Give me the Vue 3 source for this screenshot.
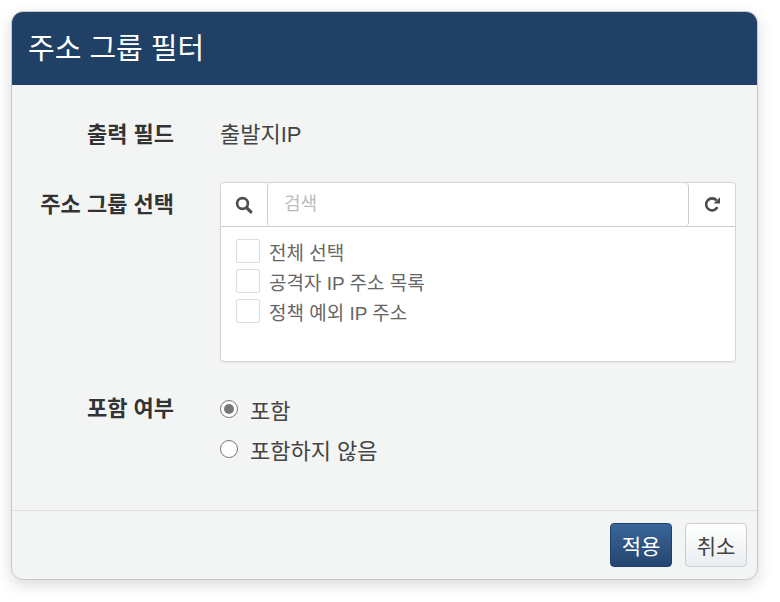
<template>
  <div class="page">
    <div class="modal">
      <div class="modal-header">
        <span class="modal-title">주소 그룹 필터</span>
      </div>

      <div class="modal-body">
        <div class="form-row first">
          <label class="form-label">출력 필드</label>
          <div class="form-value">출발지IP</div>
        </div>

        <div class="form-row group-row">
          <label class="form-label">주소 그룹 선택</label>
          <div class="picker">
            <div class="picker-toolbar">
              <span class="addon left">
                <svg width="18" height="18" viewBox="0 0 18 18">
                  <circle cx="7.5" cy="7.5" r="5.4" fill="none" stroke="#4d4d4d" stroke-width="2.7" />
                  <path d="M11.6 11.6 L15.8 15.8" stroke="#4d4d4d" stroke-width="3.2" stroke-linecap="round" />
                </svg>
              </span>
              <input class="search-input" type="text" placeholder="검색" />
              <span class="addon right">
                <svg width="17" height="17" viewBox="0 0 17 17">
                  <path d="M13.4 11.2 A6 6 0 1 1 12.6 4.4" fill="none" stroke="#4d4d4d" stroke-width="2.6" />
                  <path d="M16 1.2 V7.6 H9.6 Z" fill="#4d4d4d" />
                </svg>
              </span>
            </div>
            <ul class="picker-list">
              <li v-for="item in groups" :key="item" class="picker-item">
                <span class="check-box"></span>
                <span>{{ item }}</span>
              </li>
            </ul>
          </div>
        </div>

        <div class="form-row include-row">
          <label class="form-label">포함 여부</label>
          <div class="radios">
            <div v-for="opt in options" :key="opt.value" class="radio-item">
              <span class="radio" :class="{ checked: include === opt.value }"></span>
              <span>{{ opt.label }}</span>
            </div>
          </div>
        </div>
      </div>

      <div class="modal-footer">
        <button class="btn primary">적용</button>
        <button class="btn">취소</button>
      </div>
    </div>
  </div>
</template>

<script setup>
import { ref } from 'vue';

const groups = ['전체 선택', '공격자 IP 주소 목록', '정책 예외 IP 주소'];
const options = [
  { value: 'in', label: '포함' },
  { value: 'out', label: '포함하지 않음' }
];
const include = ref('in');
</script>

<style>
html, body {
  margin: 0;
  background: #fff;
}
</style>

<style scoped>
.page {
  width: 780px;
  height: 602px;
  padding: 11px 22px 22px 11px;
  box-sizing: border-box;
  font-family: "Liberation Sans", "Noto Sans CJK KR", sans-serif;
  color: #333;
}

.modal {
  height: 569px;
  display: flex;
  flex-direction: column;
  box-sizing: border-box;
  background-color: #f3f5f5;
  border: 1px solid #c8c8c8;
  border-radius: 12px;
  box-shadow: 0 5px 15px rgba(0, 0, 0, 0.15);
  overflow: hidden;
}

.modal-header {
  height: 73px;
  flex: none;
  padding: 0 16px;
  display: flex;
  align-items: center;
  background-color: #204066;
}

.modal-title {
  font-size: 29px;
  color: #fff;
  position: relative;
  top: -3px;
}

.modal-body {
  flex: 1;
  padding: 0 21px 0 0;
}

.form-row {
  display: flex;
}

.form-row.first {
  margin-top: 32px;
  height: 30px;
  align-items: center;
}

.group-row {
  margin-top: 35px;
}

.include-row {
  margin-top: 30px;
}

.form-label {
  width: 162px;
  flex: none;
  text-align: right;
  font-size: 22px;
  font-weight: 700;
  color: #333;
}

.form-value {
  margin-left: 46px;
  font-size: 22px;
  color: #444;
}

.group-row .form-label {
  line-height: 46px;
}

.include-row .form-label {
  line-height: 34px;
}

.picker {
  margin-left: 46px;
  flex: 1;
  height: 180px;
  box-sizing: border-box;
  border: 1px solid #d4d4d4;
  border-radius: 4px;
  background-color: #fff;
  box-shadow: 0 1px 2px rgba(0, 0, 0, 0.06);
}

.picker-toolbar {
  display: flex;
  height: 43px;
  border-bottom: 1px solid #ccc;
}

.addon {
  width: 46px;
  flex: none;
  display: flex;
  align-items: center;
  justify-content: center;
}

.search-input {
  flex: 1;
  min-width: 0;
  box-sizing: border-box;
  height: 43px;
  margin: 0;
  padding: 0 16px;
  border: 1px solid #ccc;
  border-top: none;
  border-bottom: none;
  border-radius: 4px;
  outline: none;
  font-family: inherit;
  font-size: 18px;
}

.search-input::placeholder {
  color: #bbb;
}

.picker-list {
  list-style: none;
  margin: 0;
  padding: 9px 15px 0;
}

.picker-item {
  display: flex;
  align-items: center;
  height: 30px;
  gap: 9px;
  font-size: 19px;
  color: #666;
}

.check-box {
  width: 24px;
  height: 24px;
  box-sizing: border-box;
  border: 1px solid #ddd;
  border-radius: 2px;
  background-color: #fff;
}

.radios {
  margin-left: 46px;
  display: flex;
  flex-direction: column;
  gap: 6px;
}

.radio-item {
  display: flex;
  align-items: center;
  height: 34px;
  gap: 12px;
  font-size: 22px;
  color: #444;
}

.radio {
  width: 18px;
  height: 18px;
  box-sizing: border-box;
  border: 1.5px solid #777;
  border-radius: 50%;
  background-color: #fff;
  display: flex;
  align-items: center;
  justify-content: center;
}

.radio.checked::after {
  content: "";
  width: 10px;
  height: 10px;
  border-radius: 50%;
  background-color: #777;
}

.modal-footer {
  height: 69px;
  flex: none;
  box-sizing: border-box;
  display: flex;
  justify-content: flex-end;
  align-items: flex-start;
  gap: 13px;
  padding: 12px 10px 0 0;
  border-top: 1px solid #ddd;
}

.btn {
  width: 62px;
  height: 44px;
  padding: 0;
  border: 1px solid #ccc;
  border-radius: 4px;
  font-family: inherit;
  font-size: 21px;
  color: #444;
  background: linear-gradient(to bottom, #fff, #e9edf1);
  cursor: pointer;
}

.btn.primary {
  color: #fff;
  border-color: #20406a;
  background: linear-gradient(to bottom, #3a6699, #24456f);
}
</style>
